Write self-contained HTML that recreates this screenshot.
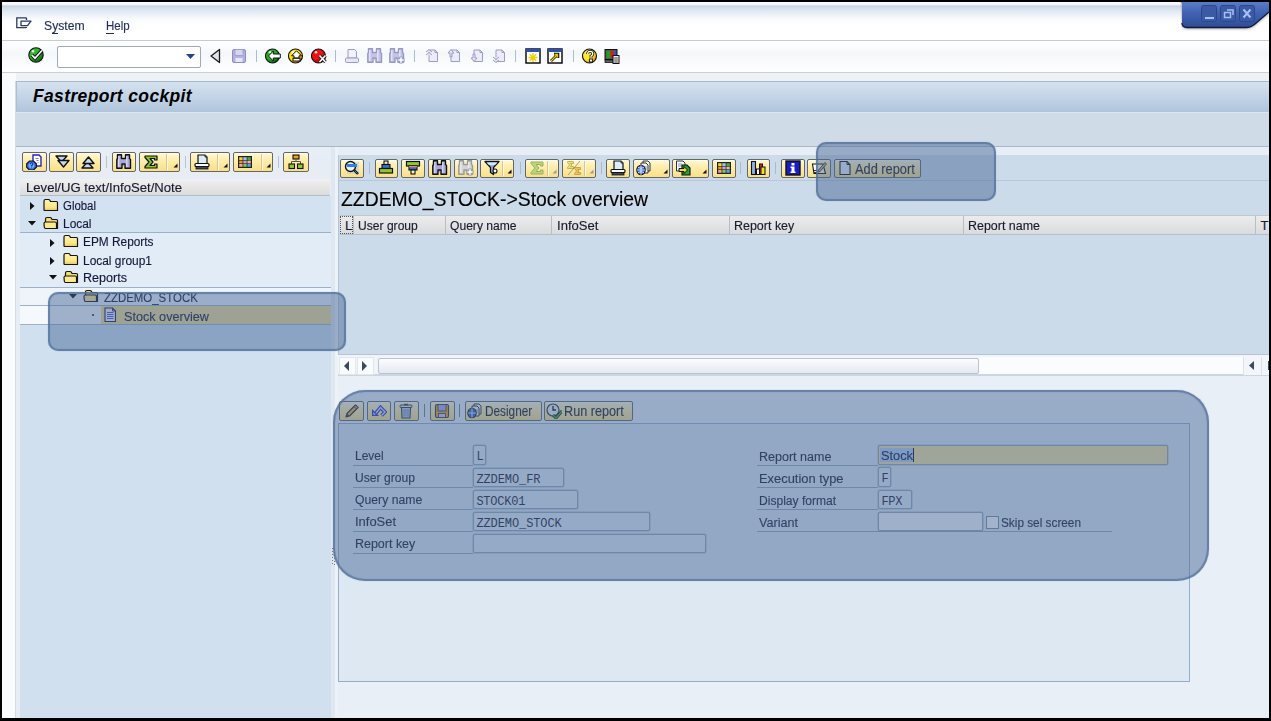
<!DOCTYPE html><html><head><meta charset="utf-8"><style>
html,body{margin:0;padding:0;width:1271px;height:721px;overflow:hidden;background:#000;}
body div{position:absolute;}
</style></head><body>
<div style="left:0px;top:0px;width:1271px;height:721px;background:#000;"></div>
<div style="left:2px;top:2px;width:1267px;height:716px;background:#e9eff6;"></div>
<div style="left:2px;top:2px;width:1267px;height:38px;background:linear-gradient(#f4f7fb 0px,#f4f7fb 1px,#fdfeff 2px,#c9d5e5 4px,#e6ecf4 10px,#fbfcfe 18px,#ffffff 24px,#ffffff 38px);"></div>
<div style="left:2px;top:40px;width:1267px;height:1px;background:#c3ccd8;"></div>
<div style="left:2px;top:41px;width:1267px;height:1px;background:#e2e7ee;"></div>
<div style="left:2px;top:41px;width:1267px;height:31px;background:linear-gradient(#ffffff,#f4f7fa 40%,#ffffff);"></div>
<div style="left:2px;top:72px;width:1267px;height:1px;background:#c8d0da;"></div>
<div style="left:2px;top:73px;width:1267px;height:8px;background:#eef2f7;"></div>
<div style="left:2px;top:73px;width:14px;height:645px;background:#f9fbfd;"></div>
<div style="left:16px;top:81px;width:1253px;height:31px;background:linear-gradient(#d5e2ef,#c3d4e6 50%,#afc5dc);border-top:1px solid #a8b8cb;box-sizing:border-box;"></div>
<div style="left:16px;top:112px;width:1253px;height:1px;background:#dde6ef;"></div>
<div style="left:16px;top:81px;width:1px;height:31px;background:#aebdd0;"></div>
<div style="left:16px;top:113px;width:1px;height:33px;background:#b9c6d5;"></div>
<div style="left:16px;top:113px;width:1253px;height:33px;background:#cfdbe6;"></div>
<div style="left:16px;top:146px;width:1253px;height:1px;background:#a9b8c9;"></div>
<div style="left:16px;top:147px;width:1253px;height:8px;background:#e8eef5;"></div>
<div style="left:15px;top:81px;width:1px;height:637px;background:#d3dbe6;"></div>
<div style="left:33px;top:87.99px;font-size:17.5px;line-height:17.5px;color:#000;font-family:'Liberation Sans', sans-serif;letter-spacing:0.351px;white-space:nowrap;font-weight:bold;font-style:italic;">Fastreport cockpit</div>
<div style="left:43.8px;top:18.78px;font-size:13.25px;line-height:13.25px;color:#1f2d5a;font-family:'Liberation Sans', sans-serif;letter-spacing:0.000px;white-space:nowrap;transform:scaleX(0.9211);transform-origin:0 0;-webkit-text-stroke:0.15px #1f2d5a;">System</div>
<div style="left:105.6px;top:18.78px;font-size:13.25px;line-height:13.25px;color:#1f2d5a;font-family:'Liberation Sans', sans-serif;letter-spacing:0.000px;white-space:nowrap;transform:scaleX(0.8656);transform-origin:0 0;-webkit-text-stroke:0.15px #1f2d5a;">Help</div>
<div style="left:52px;top:33px;width:6px;height:1px;background:#1f2d5a;"></div>
<div style="left:106px;top:33px;width:8px;height:1px;background:#1f2d5a;"></div>
<div style="left:16px;top:155px;width:315px;height:563px;background:#e6edf5;"></div>
<div style="left:20px;top:196px;width:311px;height:522px;background:#d0e0ee;"></div>
<div style="left:331px;top:147px;width:4px;height:571px;background:#dfe7f0;"></div>
<div style="left:335px;top:147px;width:3px;height:571px;background:#edf2f7;"></div>
<div style="left:20px;top:179px;width:310px;height:17px;background:linear-gradient(#f0f0f0,#dcdcdc);border-bottom:1px solid #b5bdc6;box-sizing:border-box;"></div>
<div style="left:26px;top:180.78px;font-size:13.25px;line-height:13.25px;color:#1a1a2e;font-family:'Liberation Sans', sans-serif;letter-spacing:0.000px;white-space:nowrap;transform:scaleX(0.9898);transform-origin:0 0;-webkit-text-stroke:0.15px #1a1a2e;">Level/UG text/InfoSet/Note</div>
<div style="left:20px;top:196px;width:311px;height:36px;background:#d3e2f0;"></div>
<div style="left:20px;top:232px;width:311px;height:1px;background:#9db2c9;"></div>
<div style="left:20px;top:233px;width:311px;height:54px;background:#e2ecf7;"></div>
<div style="left:20px;top:287px;width:311px;height:1px;background:#9db2c9;"></div>
<div style="left:20px;top:288px;width:311px;height:17px;background:#eef4fa;"></div>
<div style="left:20px;top:305px;width:311px;height:1px;background:#9db2c9;"></div>
<div style="left:20px;top:306px;width:311px;height:18px;background:#f5f8fc;"></div>
<div style="left:20px;top:324px;width:311px;height:1px;background:#9db2c9;"></div>
<div style="left:101px;top:306px;width:230px;height:18px;background:#f2dc92;"></div>
<div style="left:338px;top:155px;width:931px;height:200px;background:#ccdbe9;"></div>
<div style="left:338px;top:155px;width:1px;height:200px;background:#b4c4d6;"></div>
<div style="left:338px;top:180px;width:931px;height:1px;background:#b9c8d8;"></div>
<div style="left:341px;top:188.66px;font-size:20.25px;line-height:20.25px;color:#000;font-family:'Liberation Sans', sans-serif;letter-spacing:0.000px;white-space:nowrap;transform:scaleX(0.9567);transform-origin:0 0;-webkit-text-stroke:0.15px #000;">ZZDEMO_STOCK-&gt;Stock overview</div>
<div style="left:340px;top:215px;width:929px;height:20px;background:linear-gradient(#ececec,#d9dbde);border-top:1px solid #c2c8cf;border-bottom:1px solid #b8bec6;box-sizing:border-box;"></div>
<div style="left:353px;top:216px;width:1px;height:18px;background:#b9bec5;"></div>
<div style="left:445px;top:216px;width:1px;height:18px;background:#b9bec5;"></div>
<div style="left:551px;top:216px;width:1px;height:18px;background:#b9bec5;"></div>
<div style="left:729px;top:216px;width:1px;height:18px;background:#b9bec5;"></div>
<div style="left:963px;top:216px;width:1px;height:18px;background:#b9bec5;"></div>
<div style="left:1255px;top:216px;width:1px;height:18px;background:#b9bec5;"></div>
<div style="left:340px;top:216px;width:13px;height:18px;border:1px dotted #555;box-sizing:border-box;"></div>
<div style="left:345px;top:219.08px;font-size:13.25px;line-height:13.25px;color:#1a1a2e;font-family:'Liberation Sans', sans-serif;letter-spacing:0.000px;white-space:nowrap;-webkit-text-stroke:0.15px #1a1a2e;">L</div>
<div style="left:357.5px;top:219.08px;font-size:13.25px;line-height:13.25px;color:#1a1a2e;font-family:'Liberation Sans', sans-serif;letter-spacing:0.000px;white-space:nowrap;transform:scaleX(0.9123);transform-origin:0 0;-webkit-text-stroke:0.15px #1a1a2e;">User group</div>
<div style="left:450.4px;top:219.08px;font-size:13.25px;line-height:13.25px;color:#1a1a2e;font-family:'Liberation Sans', sans-serif;letter-spacing:0.000px;white-space:nowrap;transform:scaleX(0.9133);transform-origin:0 0;-webkit-text-stroke:0.15px #1a1a2e;">Query name</div>
<div style="left:556.5px;top:219.08px;font-size:13.25px;line-height:13.25px;color:#1a1a2e;font-family:'Liberation Sans', sans-serif;letter-spacing:0.000px;white-space:nowrap;transform:scaleX(0.9857);transform-origin:0 0;-webkit-text-stroke:0.15px #1a1a2e;">InfoSet</div>
<div style="left:734.3px;top:219.08px;font-size:13.25px;line-height:13.25px;color:#1a1a2e;font-family:'Liberation Sans', sans-serif;letter-spacing:0.000px;white-space:nowrap;transform:scaleX(0.9410);transform-origin:0 0;-webkit-text-stroke:0.15px #1a1a2e;">Report key</div>
<div style="left:968px;top:219.08px;font-size:13.25px;line-height:13.25px;color:#1a1a2e;font-family:'Liberation Sans', sans-serif;letter-spacing:0.000px;white-space:nowrap;transform:scaleX(0.9398);transform-origin:0 0;-webkit-text-stroke:0.15px #1a1a2e;">Report name</div>
<div style="left:1260.5px;top:218.78px;font-size:13.25px;line-height:13.25px;color:#1a1a2e;font-family:'Liberation Sans', sans-serif;letter-spacing:0.000px;white-space:nowrap;-webkit-text-stroke:0.15px #1a1a2e;">T</div>
<div style="left:338px;top:354px;width:931px;height:1px;background:#b4c4d6;"></div>
<div style="left:338px;top:355px;width:931px;height:21px;background:#f1f5f9;border-bottom:2px solid #cdd6e0;box-sizing:border-box;"></div>
<div style="left:979px;top:357px;width:264px;height:17px;background:#fbfcfd;"></div>
<div style="left:1243px;top:357px;width:1px;height:18px;background:#d8e2ec;"></div>
<div style="left:1244px;top:357px;width:17px;height:18px;background:#f2f5f9;"></div>
<div style="left:1261px;top:357px;width:1px;height:18px;background:#d8e2ec;"></div>
<div style="left:1262px;top:357px;width:7px;height:18px;background:#f2f5f9;"></div>
<div style="left:1268px;top:361px;width:1px;height:9px;background:#3a4a5c;"></div>
<div style="left:675px;top:365px;width:1px;height:1px;background:#9aa8b8;"></div>
<div style="left:674px;top:364px;width:1px;height:1px;background:#ffffff;"></div>
<div style="left:675px;top:369px;width:1px;height:1px;background:#9aa8b8;"></div>
<div style="left:674px;top:368px;width:1px;height:1px;background:#ffffff;"></div>
<div style="left:678px;top:365px;width:1px;height:1px;background:#9aa8b8;"></div>
<div style="left:677px;top:364px;width:1px;height:1px;background:#ffffff;"></div>
<div style="left:678px;top:369px;width:1px;height:1px;background:#9aa8b8;"></div>
<div style="left:677px;top:368px;width:1px;height:1px;background:#ffffff;"></div>
<div style="left:681px;top:365px;width:1px;height:1px;background:#9aa8b8;"></div>
<div style="left:680px;top:364px;width:1px;height:1px;background:#ffffff;"></div>
<div style="left:681px;top:369px;width:1px;height:1px;background:#9aa8b8;"></div>
<div style="left:680px;top:368px;width:1px;height:1px;background:#ffffff;"></div>
<div style="left:378px;top:358px;width:601px;height:16px;background:linear-gradient(#fbfcfd,#e4eaf1);border:1px solid #b9c4d0;border-radius:2px;box-sizing:border-box;"></div>
<div style="left:339px;top:357px;width:17px;height:18px;background:#f9fbfd;border:1px solid #e1e7ee;box-sizing:border-box;"></div>
<div style="left:357px;top:357px;width:17px;height:18px;background:#f9fbfd;border:1px solid #e1e7ee;box-sizing:border-box;"></div>
<svg style="position:absolute;left:344px;top:361px;" width="6" height="10" viewBox="0 0 6 10"><path d="M5 0 L0 5 L5 10Z" fill="#3a4a5c"/></svg>
<svg style="position:absolute;left:362px;top:361px;" width="6" height="10" viewBox="0 0 6 10"><path d="M0 0 L5 5 L0 10Z" fill="#3a4a5c"/></svg>
<svg style="position:absolute;left:1249px;top:361px;" width="6" height="9" viewBox="0 0 6 9"><path d="M5 0 L0 4.5 L5 9Z" fill="#3a4a5c"/></svg>
<div style="left:338px;top:423px;width:852px;height:259px;background:#dde8f2;border:1px solid #94afcc;box-sizing:border-box;"></div>
<div style="left:354.5px;top:448.78px;font-size:13.25px;line-height:13.25px;color:#1a1a2e;font-family:'Liberation Sans', sans-serif;letter-spacing:0.000px;white-space:nowrap;transform:scaleX(0.9057);transform-origin:0 0;-webkit-text-stroke:0.15px #1a1a2e;">Level</div>
<div style="left:352.5px;top:465px;width:120.5px;height:1px;background:#97a8bc;"></div>
<div style="left:354.5px;top:470.78px;font-size:13.25px;line-height:13.25px;color:#1a1a2e;font-family:'Liberation Sans', sans-serif;letter-spacing:0.000px;white-space:nowrap;transform:scaleX(0.9154);transform-origin:0 0;-webkit-text-stroke:0.15px #1a1a2e;">User group</div>
<div style="left:352.5px;top:487px;width:120.5px;height:1px;background:#97a8bc;"></div>
<div style="left:354.5px;top:492.78px;font-size:13.25px;line-height:13.25px;color:#1a1a2e;font-family:'Liberation Sans', sans-serif;letter-spacing:0.000px;white-space:nowrap;transform:scaleX(0.9229);transform-origin:0 0;-webkit-text-stroke:0.15px #1a1a2e;">Query name</div>
<div style="left:352.5px;top:509px;width:120.5px;height:1px;background:#97a8bc;"></div>
<div style="left:354.5px;top:514.78px;font-size:13.25px;line-height:13.25px;color:#1a1a2e;font-family:'Liberation Sans', sans-serif;letter-spacing:0.000px;white-space:nowrap;transform:scaleX(0.9762);transform-origin:0 0;-webkit-text-stroke:0.15px #1a1a2e;">InfoSet</div>
<div style="left:352.5px;top:531px;width:120.5px;height:1px;background:#97a8bc;"></div>
<div style="left:354.5px;top:536.78px;font-size:13.25px;line-height:13.25px;color:#1a1a2e;font-family:'Liberation Sans', sans-serif;letter-spacing:0.000px;white-space:nowrap;transform:scaleX(0.9410);transform-origin:0 0;-webkit-text-stroke:0.15px #1a1a2e;">Report key</div>
<div style="left:352.5px;top:553px;width:120.5px;height:1px;background:#97a8bc;"></div>
<div style="left:473px;top:445px;width:13px;height:20px;background:#e3ecf5;border:1px solid #97a6b8;border-radius:2px;box-sizing:border-box;box-shadow:0 0 0 0.5px rgba(120,140,165,0.5);"></div>
<div style="left:476.4px;top:450.60px;font-size:12px;line-height:12px;color:#1a1a2e;font-family:'Liberation Mono', monospace;letter-spacing:0.000px;white-space:nowrap;">L</div>
<div style="left:473px;top:468px;width:91px;height:19px;background:#e3ecf5;border:1px solid #97a6b8;border-radius:2px;box-sizing:border-box;box-shadow:0 0 0 0.5px rgba(120,140,165,0.5);"></div>
<div style="left:476.4px;top:473.60px;font-size:12px;line-height:12px;color:#1a1a2e;font-family:'Liberation Mono', monospace;letter-spacing:-0.090px;white-space:nowrap;">ZZDEMO_FR</div>
<div style="left:473px;top:490px;width:105px;height:19px;background:#e3ecf5;border:1px solid #97a6b8;border-radius:2px;box-sizing:border-box;box-shadow:0 0 0 0.5px rgba(120,140,165,0.5);"></div>
<div style="left:476.4px;top:495.60px;font-size:12px;line-height:12px;color:#1a1a2e;font-family:'Liberation Mono', monospace;letter-spacing:-0.232px;white-space:nowrap;">STOCK01</div>
<div style="left:473px;top:512px;width:177px;height:19px;background:#e3ecf5;border:1px solid #97a6b8;border-radius:2px;box-sizing:border-box;box-shadow:0 0 0 0.5px rgba(120,140,165,0.5);"></div>
<div style="left:476.4px;top:517.60px;font-size:12px;line-height:12px;color:#1a1a2e;font-family:'Liberation Mono', monospace;letter-spacing:-0.093px;white-space:nowrap;">ZZDEMO_STOCK</div>
<div style="left:473px;top:534px;width:233px;height:19px;background:#e3ecf5;border:1px solid #97a6b8;border-radius:2px;box-sizing:border-box;box-shadow:0 0 0 0.5px rgba(120,140,165,0.5);"></div>
<div style="left:759px;top:449.58px;font-size:13.25px;line-height:13.25px;color:#1a1a2e;font-family:'Liberation Sans', sans-serif;letter-spacing:0.000px;white-space:nowrap;transform:scaleX(0.9451);transform-origin:0 0;-webkit-text-stroke:0.15px #1a1a2e;">Report name</div>
<div style="left:757px;top:465px;width:121px;height:1px;background:#97a8bc;"></div>
<div style="left:759px;top:471.58px;font-size:13.25px;line-height:13.25px;color:#1a1a2e;font-family:'Liberation Sans', sans-serif;letter-spacing:0.000px;white-space:nowrap;transform:scaleX(0.9721);transform-origin:0 0;-webkit-text-stroke:0.15px #1a1a2e;">Execution type</div>
<div style="left:757px;top:487px;width:121px;height:1px;background:#97a8bc;"></div>
<div style="left:759px;top:493.58px;font-size:13.25px;line-height:13.25px;color:#1a1a2e;font-family:'Liberation Sans', sans-serif;letter-spacing:0.000px;white-space:nowrap;transform:scaleX(0.9116);transform-origin:0 0;-webkit-text-stroke:0.15px #1a1a2e;">Display format</div>
<div style="left:757px;top:509px;width:121px;height:1px;background:#97a8bc;"></div>
<div style="left:759px;top:515.58px;font-size:13.25px;line-height:13.25px;color:#1a1a2e;font-family:'Liberation Sans', sans-serif;letter-spacing:0.000px;white-space:nowrap;transform:scaleX(0.9512);transform-origin:0 0;-webkit-text-stroke:0.15px #1a1a2e;">Variant</div>
<div style="left:757px;top:531px;width:355px;height:1px;background:#97a8bc;"></div>
<div style="left:878px;top:445px;width:290px;height:20px;background:#f7e39a;border:1px solid #97a6b8;border-radius:2px;box-sizing:border-box;box-shadow:0 0 0 0.5px rgba(120,140,165,0.5);"></div>
<div style="left:880px;top:448px;width:34px;height:14px;background:#b4cdf5;"></div>
<div style="left:881px;top:449.28px;font-size:13.25px;line-height:13.25px;color:#101830;font-family:'Liberation Sans', sans-serif;letter-spacing:0.000px;white-space:nowrap;transform:scaleX(0.9656);transform-origin:0 0;-webkit-text-stroke:0.15px #101830;">Stock</div>
<div style="left:913px;top:448px;width:1px;height:14px;background:#111;"></div>
<div style="left:878px;top:467px;width:13px;height:20px;background:#e3ecf5;border:1px solid #97a6b8;border-radius:2px;box-sizing:border-box;box-shadow:0 0 0 0.5px rgba(120,140,165,0.5);"></div>
<div style="left:881.4px;top:472.60px;font-size:12px;line-height:12px;color:#1a1a2e;font-family:'Liberation Mono', monospace;letter-spacing:0.000px;white-space:nowrap;">F</div>
<div style="left:878px;top:490px;width:34px;height:19px;background:#e3ecf5;border:1px solid #97a6b8;border-radius:2px;box-sizing:border-box;box-shadow:0 0 0 0.5px rgba(120,140,165,0.5);"></div>
<div style="left:881.4px;top:495.60px;font-size:12px;line-height:12px;color:#1a1a2e;font-family:'Liberation Mono', monospace;letter-spacing:-0.270px;white-space:nowrap;">FPX</div>
<div style="left:878px;top:512px;width:105px;height:19px;background:#f7f9fc;border:1px solid #97a6b8;border-radius:2px;box-sizing:border-box;box-shadow:0 0 0 0.5px rgba(120,140,165,0.5);"></div>
<div style="left:986px;top:516px;width:13px;height:13px;background:#fff;border:1px solid #7b8a9c;box-sizing:border-box;"></div>
<div style="left:1001px;top:516.28px;font-size:13.25px;line-height:13.25px;color:#1a1a2e;font-family:'Liberation Sans', sans-serif;letter-spacing:0.000px;white-space:nowrap;transform:scaleX(0.8903);transform-origin:0 0;-webkit-text-stroke:0.15px #1a1a2e;">Skip sel screen</div>
<svg style="position:absolute;left:16px;top:17px;" width="16" height="12" viewBox="0 0 16 12"><path d="M10.5 3 V1.5 Q10.5 0.8 9.8 0.8 H0.8 V10.6 H9.8 Q10.5 10.6 10.5 10" fill="none" stroke="#2a3a68" stroke-width="1.3"/><path d="M5 8.6 V4.2 H15 L11.5 8.6Z" fill="none" stroke="#2a3a68" stroke-width="1.3" stroke-linejoin="round"/></svg>
<svg style="position:absolute;left:28px;top:47px;" width="16" height="16" viewBox="0 0 16 16"><defs><radialGradient id="g2db82d" cx="0.3" cy="0.25" r="0.85"><stop offset="0" stop-color="#2db82d"/><stop offset="0.55" stop-color="#2db82d"/><stop offset="1" stop-color="#0a4a10"/></radialGradient></defs><circle cx="8" cy="8" r="7.2" fill="url(#g2db82d)" stroke="#111" stroke-width="1.1"/><circle cx="5" cy="4.3" r="1.3" fill="#fff" opacity="0.9"/><path d="M3.8 8 L7 11.2 L14 3.5" fill="none" stroke="#111" stroke-width="3.6"/><path d="M3.8 8 L7 11.2 L14 3.5" fill="none" stroke="#fff" stroke-width="1.7"/></svg>
<div style="left:57px;top:46px;width:144px;height:22px;background:#fff;border:1px solid #a0a8b2;border-radius:2px;box-sizing:border-box;"></div>
<svg style="position:absolute;left:186px;top:54px;" width="9" height="5" viewBox="0 0 9 5"><path d="M0 0 H9 L4.5 5Z" fill="#24457e"/></svg>
<svg style="position:absolute;left:208px;top:48px;" width="16" height="16" viewBox="0 0 16 16"><path d="M11.5 1.5 V14.5 L3 8Z" fill="#dde3ea" stroke="#1a1a1a" stroke-width="1.3" stroke-linejoin="round"/></svg>
<svg style="position:absolute;left:231px;top:48px;" width="16" height="16" viewBox="0 0 16 16"><rect x="1.5" y="1.5" width="13" height="13" rx="1.5" fill="#b3b3dc" stroke="#8c8cc4"/><rect x="4" y="1.5" width="8" height="6" fill="#d6d6f0" stroke="#9a9acc" stroke-width="0.8"/><rect x="4.5" y="10" width="7" height="4" fill="#e8e8f8"/></svg>
<div style="left:256px;top:50px;width:1px;height:12px;background:#a9bdd3;"></div>
<svg style="position:absolute;left:265px;top:48px;" width="16" height="16" viewBox="0 0 16 16"><defs><radialGradient id="g22b022" cx="0.3" cy="0.25" r="0.85"><stop offset="0" stop-color="#22b022"/><stop offset="0.55" stop-color="#22b022"/><stop offset="1" stop-color="#064a10"/></radialGradient></defs><circle cx="7.5" cy="8" r="7" fill="url(#g22b022)" stroke="#111" stroke-width="1.1"/><circle cx="5" cy="4.3" r="1.3" fill="#fff" opacity="0.9"/><path d="M3.5 8 L8.3 3 V6 H15.3 V10 H8.3 V13Z" fill="#fff" stroke="#111" stroke-width="1"/></svg>
<svg style="position:absolute;left:288px;top:48px;" width="16" height="16" viewBox="0 0 16 16"><defs><radialGradient id="gffe800" cx="0.3" cy="0.25" r="0.85"><stop offset="0" stop-color="#ffe800"/><stop offset="0.55" stop-color="#ffe800"/><stop offset="1" stop-color="#e07000"/></radialGradient></defs><circle cx="7.5" cy="8" r="7" fill="url(#gffe800)" stroke="#111" stroke-width="1.1"/><circle cx="5" cy="4.3" r="1.3" fill="#fff" opacity="0.9"/><path d="M8.5 2.8 L13.5 7.8 H11 V10 H6 V7.8 H3.5Z" fill="#fff" stroke="#111" stroke-width="1"/><rect x="5" y="10.3" width="7" height="2.7" fill="#fff" stroke="#111" stroke-width="1"/></svg>
<svg style="position:absolute;left:311px;top:48px;" width="16" height="16" viewBox="0 0 16 16"><defs><radialGradient id="gf01010" cx="0.3" cy="0.25" r="0.85"><stop offset="0" stop-color="#f01010"/><stop offset="0.55" stop-color="#f01010"/><stop offset="1" stop-color="#900000"/></radialGradient></defs><circle cx="7.5" cy="8" r="7" fill="url(#gf01010)" stroke="#111" stroke-width="1.1"/><circle cx="5" cy="4.3" r="1.3" fill="#fff" opacity="0.9"/><path d="M8.5 7.5 L14.5 14 M14.5 7.5 L8.5 14" stroke="#222" stroke-width="3.4"/><path d="M8.5 7.5 L14.5 14 M14.5 7.5 L8.5 14" stroke="#fff" stroke-width="1.6"/></svg>
<div style="left:335px;top:50px;width:1px;height:12px;background:#a9bdd3;"></div>
<svg style="position:absolute;left:344px;top:48px;" width="16" height="16" viewBox="0 0 16 16"><path d="M4 1.5 H10.5 L12.5 3.5 V10 H4Z" fill="#f2f2fa" stroke="#9c9cc8"/><rect x="1.5" y="10" width="13" height="4.5" rx="1" fill="#e6e6f4" stroke="#9c9cc8"/></svg>
<svg style="position:absolute;left:367px;top:48px;" width="16" height="16" viewBox="0 0 16 16"><path d="M1.5 0.8 H5.5 V4.5 H9.5 V0.8 H13.5 V4.5 L14.5 5.5 V14.2 H9 V10 H6 V14.2 H0.8 V5.5 L1.5 4.5Z" fill="#c4c4e4" stroke="#9898c8" stroke-width="1.4" stroke-linejoin="round"/><path d="M2.8 2 V13 M10.8 2 V13" stroke="#ffffff" stroke-width="1" opacity="0.75"/><rect x="7" y="11" width="1.2" height="1.2" fill="#c4c4e4"/></svg>
<svg style="position:absolute;left:389px;top:48px;" width="16" height="16" viewBox="0 0 16 16"><path d="M1.5 0.8 H5.5 V4.5 H9.5 V0.8 H13.5 V4.5 L14.5 5.5 V14.2 H9 V10 H6 V14.2 H0.8 V5.5 L1.5 4.5Z" fill="#c4c4e4" stroke="#9898c8" stroke-width="1.4" stroke-linejoin="round"/><path d="M2.8 2 V13 M10.8 2 V13" stroke="#ffffff" stroke-width="1" opacity="0.75"/><rect x="7" y="11" width="1.2" height="1.2" fill="#c4c4e4"/><path d="M12 8.5 V15.5 M8.5 12 H15.5" stroke="#9898c8" stroke-width="3.4"/><path d="M12 9.3 V14.7 M9.3 12 H14.7" stroke="#fff" stroke-width="1.5"/></svg>
<div style="left:414px;top:50px;width:1px;height:12px;background:#a9bdd3;"></div>
<svg style="position:absolute;left:424px;top:48px;" width="16" height="16" viewBox="0 0 16 16"><path d="M5 2 H11 L13.5 4.5 V13.5 H5Z" fill="#ececf8" stroke="#9c9cc8"/><path d="M11 2 V4.5 H13.5" fill="none" stroke="#9c9cc8"/><path d="M2 4 L5 1.5 L8 4 M2 7 L5 4.5 L8 7" fill="#e4e4f4" stroke="#9c9cc8"/></svg>
<svg style="position:absolute;left:446px;top:48px;" width="16" height="16" viewBox="0 0 16 16"><path d="M5 2 H11 L13.5 4.5 V13.5 H5Z" fill="#ececf8" stroke="#9c9cc8"/><path d="M11 2 V4.5 H13.5" fill="none" stroke="#9c9cc8"/><path d="M2 5 L5 1.5 L8 5 H6 V9 H4 V5Z" fill="#e4e4f4" stroke="#9c9cc8"/></svg>
<svg style="position:absolute;left:469px;top:48px;" width="16" height="16" viewBox="0 0 16 16"><path d="M5 2 H11 L13.5 4.5 V13.5 H5Z" fill="#ececf8" stroke="#9c9cc8"/><path d="M11 2 V4.5 H13.5" fill="none" stroke="#9c9cc8"/><path d="M2 10 L5 13.5 L8 10 H6 V6 H4 V10Z" fill="#e4e4f4" stroke="#9c9cc8"/></svg>
<svg style="position:absolute;left:491px;top:48px;" width="16" height="16" viewBox="0 0 16 16"><path d="M5 2 H11 L13.5 4.5 V13.5 H5Z" fill="#ececf8" stroke="#9c9cc8"/><path d="M11 2 V4.5 H13.5" fill="none" stroke="#9c9cc8"/><path d="M2 9 L5 11.5 L8 9 M2 12 L5 14.5 L8 12" fill="#e4e4f4" stroke="#9c9cc8"/></svg>
<div style="left:515px;top:50px;width:1px;height:12px;background:#a9bdd3;"></div>
<svg style="position:absolute;left:525px;top:48px;" width="16" height="16" viewBox="0 0 16 16"><rect x="1" y="1" width="14" height="14" fill="#fff" stroke="#111" stroke-width="1.5"/><rect x="1" y="1" width="14" height="3" fill="#2a50b0"/><path d="M8 5 V14 M3.5 9.5 H12.5 M4.8 6.3 L11.2 12.7 M11.2 6.3 L4.8 12.7" stroke="#f0d000" stroke-width="1.3"/></svg>
<svg style="position:absolute;left:547px;top:48px;" width="16" height="16" viewBox="0 0 16 16"><rect x="1" y="1" width="14" height="14" fill="#fff" stroke="#111" stroke-width="1.5"/><rect x="1" y="1" width="14" height="3" fill="#2a50b0"/><path d="M4 13 L10 7 M7 6 H11 V10" fill="none" stroke="#111" stroke-width="2.6"/><path d="M4 13 L10 7 M7.5 6.5 H10.5 V9.5" fill="none" stroke="#f0c800" stroke-width="1.3"/></svg>
<div style="left:573px;top:50px;width:1px;height:12px;background:#a9bdd3;"></div>
<svg style="position:absolute;left:582px;top:48px;" width="16" height="16" viewBox="0 0 16 16"><defs><radialGradient id="gffe830" cx="0.3" cy="0.25" r="0.85"><stop offset="0" stop-color="#ffe830"/><stop offset="0.55" stop-color="#ffe830"/><stop offset="1" stop-color="#e08a00"/></radialGradient></defs><circle cx="7.5" cy="8" r="7" fill="url(#gffe830)" stroke="#111" stroke-width="1.1"/><circle cx="5" cy="4.3" r="1.3" fill="#fff" opacity="0.9"/><path d="M5.6 6 Q5.6 3.3 8.2 3.3 Q10.8 3.3 10.8 5.8 Q10.8 7.3 9 8 V9.8" fill="none" stroke="#111" stroke-width="2.8"/><path d="M5.6 6 Q5.6 3.3 8.2 3.3 Q10.8 3.3 10.8 5.8 Q10.8 7.3 9 8 V9.8" fill="none" stroke="#fff" stroke-width="1.3"/><rect x="7.4" y="11" width="3" height="3" fill="#fff" stroke="#111" stroke-width="0.9"/></svg>
<svg style="position:absolute;left:604px;top:48px;" width="16" height="16" viewBox="0 0 16 16"><rect x="1" y="1.5" width="12" height="10" fill="#555" stroke="#111"/><rect x="2.5" y="3" width="4" height="7" fill="#1ea01e"/><rect x="6.5" y="3" width="4" height="7" fill="#d02020"/><rect x="10" y="3" width="2" height="7" fill="#3050d0"/><rect x="1" y="12" width="8" height="2.5" fill="#666" stroke="#111" stroke-width="0.8"/><rect x="9" y="7.5" width="6" height="8" fill="#eee" stroke="#111"/><path d="M10.2 10 H13.8 M10.2 12 H13.8 M10.2 14 H13.8" stroke="#333" stroke-width="0.9"/></svg>
<div style="left:22px;top:152px;width:25px;height:20px;background:linear-gradient(#fff9dc 0%,#fff1b8 25%,#fce699 70%,#f9df88 100%);border:1px solid #666;border-radius:2px;box-sizing:border-box;box-shadow:inset 0 1px 0 #fffcea;"></div>
<svg style="position:absolute;left:26px;top:154px;" width="16" height="16" viewBox="0 0 16 16"><path d="M7 1 H13 L15 3 V12 H7Z" fill="#fff" stroke="#2424c8" stroke-width="1.4"/><path d="M9.5 4.5 H12.5 M10.5 6.5 H12.5 M11.5 8.5 H12.5" stroke="#7070a0" stroke-width="0.9"/><path d="M3.5 7 H7.5 L10.3 9.8 V13.3 L7.5 16 H3.5 L0.7 13.3 V9.8Z" fill="#3a7cf0" stroke="#111" stroke-width="1.2"/><circle cx="5.5" cy="11.5" r="2.7" fill="#8fd0ff" opacity="0.6"/><path d="M4.2 10.3 Q4.2 8.8 5.5 8.8 Q6.8 8.8 6.8 10 Q6.8 11 5.6 11.5 V12.5 M5.6 13.6 V14.3" fill="none" stroke="#1030c0" stroke-width="1.1"/></svg>
<div style="left:49px;top:152px;width:25px;height:20px;background:linear-gradient(#fff9dc 0%,#fff1b8 25%,#fce699 70%,#f9df88 100%);border:1px solid #666;border-radius:2px;box-sizing:border-box;box-shadow:inset 0 1px 0 #fffcea;"></div>
<svg style="position:absolute;left:54px;top:154px;" width="16" height="16" viewBox="0 0 16 16"><path d="M2 2 H13 L7.5 8Z" fill="#c8d8f4" stroke="#111" stroke-width="1.4" stroke-linejoin="round"/><path d="M4 6.5 H15 L9.5 13Z" fill="#c8d8f4" stroke="#111" stroke-width="1.4" stroke-linejoin="round"/></svg>
<div style="left:76px;top:152px;width:25px;height:20px;background:linear-gradient(#fff9dc 0%,#fff1b8 25%,#fce699 70%,#f9df88 100%);border:1px solid #666;border-radius:2px;box-sizing:border-box;box-shadow:inset 0 1px 0 #fffcea;"></div>
<svg style="position:absolute;left:80px;top:154px;" width="16" height="16" viewBox="0 0 16 16"><path d="M2 14 H13 L7.5 8Z" fill="#c8d8f4" stroke="#111" stroke-width="1.4" stroke-linejoin="round"/><path d="M3 9.5 H14 L8.5 3Z" fill="#c8d8f4" stroke="#111" stroke-width="1.4" stroke-linejoin="round"/></svg>
<div style="left:106px;top:156px;width:1px;height:12px;background:#b8c4d0;"></div>
<div style="left:112px;top:152px;width:24px;height:20px;background:linear-gradient(#fff9dc 0%,#fff1b8 25%,#fce699 70%,#f9df88 100%);border:1px solid #666;border-radius:2px;box-sizing:border-box;box-shadow:inset 0 1px 0 #fffcea;"></div>
<svg style="position:absolute;left:116px;top:154px;" width="16" height="16" viewBox="0 0 16 16"><path d="M1.5 0.8 H5.5 V4.5 H9.5 V0.8 H13.5 V4.5 L14.5 5.5 V14.2 H9 V10 H6 V14.2 H0.8 V5.5 L1.5 4.5Z" fill="#a8a8dc" stroke="#111" stroke-width="1.4" stroke-linejoin="round"/><path d="M2.8 2 V13 M10.8 2 V13" stroke="#ffffff" stroke-width="1" opacity="0.75"/><rect x="7" y="11" width="1.2" height="1.2" fill="#a8a8dc"/></svg>
<div style="left:139px;top:152px;width:41px;height:20px;background:linear-gradient(#fff9dc 0%,#fff1b8 25%,#fce699 70%,#f9df88 100%);border:1px solid #666;border-radius:2px;box-sizing:border-box;box-shadow:inset 0 1px 0 #fffcea;"></div>
<svg style="position:absolute;left:143px;top:154px;" width="16" height="16" viewBox="0 0 16 16"><path d="M2 2 H14 V6 H11.5 V4.5 H7 L10 8 L7 11.5 H11.5 V10 H14 V14 H2 V12.5 L6 8 L2 3.5Z" fill="#8cc820" stroke="#111" stroke-width="1.2" stroke-linejoin="round"/></svg>
<div style="left:166px;top:154px;width:1px;height:16px;background:#d8c890;"></div>
<div style="left:167px;top:154px;width:1px;height:16px;background:#fffbe8;"></div>
<svg style="position:absolute;left:173px;top:163px;" width="5" height="5" viewBox="0 0 5 5"><path d="M4.5 0.5 V4.5 H0.5Z" fill="#111"/></svg>
<div style="left:185px;top:156px;width:1px;height:12px;background:#b8c4d0;"></div>
<div style="left:190px;top:152px;width:40px;height:20px;background:linear-gradient(#fff9dc 0%,#fff1b8 25%,#fce699 70%,#f9df88 100%);border:1px solid #666;border-radius:2px;box-sizing:border-box;box-shadow:inset 0 1px 0 #fffcea;"></div>
<svg style="position:absolute;left:194px;top:154px;" width="16" height="16" viewBox="0 0 16 16"><path d="M4 1 H11 L13 3 V10 H4Z" fill="#dcecf8" stroke="#111" stroke-width="1.2"/><path d="M11 1 V3 H13" fill="#6aa0d0" stroke="#111" stroke-width="0.8"/><rect x="1" y="9.5" width="14" height="3" rx="1" fill="#fff" stroke="#111" stroke-width="1.2"/><rect x="2" y="12.5" width="12" height="2.5" fill="#3a4a6a" stroke="#111" stroke-width="0.8"/></svg>
<div style="left:217px;top:154px;width:1px;height:16px;background:#d8c890;"></div>
<div style="left:218px;top:154px;width:1px;height:16px;background:#fffbe8;"></div>
<svg style="position:absolute;left:223px;top:163px;" width="5" height="5" viewBox="0 0 5 5"><path d="M4.5 0.5 V4.5 H0.5Z" fill="#111"/></svg>
<div style="left:233px;top:152px;width:40px;height:20px;background:linear-gradient(#fff9dc 0%,#fff1b8 25%,#fce699 70%,#f9df88 100%);border:1px solid #666;border-radius:2px;box-sizing:border-box;box-shadow:inset 0 1px 0 #fffcea;"></div>
<svg style="position:absolute;left:237px;top:154px;" width="16" height="16" viewBox="0 0 16 16"><rect x="1" y="2" width="14" height="12" fill="#222" /><rect x="2.2" y="3.2" width="3.4" height="2.8" fill="#f0d820"/><rect x="6.3" y="3.2" width="3.4" height="2.8" fill="#a8c0f0"/><rect x="10.4" y="3.2" width="3.4" height="2.8" fill="#40b040"/><rect x="2.2" y="6.6" width="3.4" height="2.8" fill="#f09810"/><rect x="6.3" y="6.6" width="3.4" height="2.8" fill="#c8a0e0"/><rect x="10.4" y="6.6" width="3.4" height="2.8" fill="#f0b890"/><rect x="2.2" y="10" width="3.4" height="2.8" fill="#f0a0b0"/><rect x="6.3" y="10" width="3.4" height="2.8" fill="#80d020"/><rect x="10.4" y="10" width="3.4" height="2.8" fill="#40a8f0"/></svg>
<div style="left:261px;top:154px;width:1px;height:16px;background:#d8c890;"></div>
<div style="left:262px;top:154px;width:1px;height:16px;background:#fffbe8;"></div>
<svg style="position:absolute;left:266px;top:163px;" width="5" height="5" viewBox="0 0 5 5"><path d="M4.5 0.5 V4.5 H0.5Z" fill="#111"/></svg>
<div style="left:278px;top:156px;width:1px;height:12px;background:#b8c4d0;"></div>
<div style="left:283px;top:152px;width:26px;height:20px;background:linear-gradient(#fff9dc 0%,#fff1b8 25%,#fce699 70%,#f9df88 100%);border:1px solid #666;border-radius:2px;box-sizing:border-box;box-shadow:inset 0 1px 0 #fffcea;"></div>
<svg style="position:absolute;left:288px;top:154px;" width="16" height="16" viewBox="0 0 16 16"><rect x="5" y="1" width="6" height="4" fill="#f0a020" stroke="#111" stroke-width="1.1"/><path d="M8 5 V7.5 M3.5 10 V7.5 H12.5 V10" fill="none" stroke="#555" stroke-width="1"/><rect x="1" y="10" width="5.5" height="4.5" fill="#90c830" stroke="#111" stroke-width="1.1"/><rect x="9.5" y="10" width="5.5" height="4.5" fill="#90c830" stroke="#111" stroke-width="1.1"/></svg>
<svg style="position:absolute;left:30px;top:202px;" width="5" height="8" viewBox="0 0 5 8"><path d="M0 0 L4.5 4 L0 8Z" fill="#111"/></svg>
<svg style="position:absolute;left:43px;top:198px;" width="16" height="16" viewBox="0 0 16 16"><defs><linearGradient id="fg" x1="0" y1="0" x2="0" y2="1"><stop offset="0" stop-color="#fff3b0"/><stop offset="0.7" stop-color="#fbe68a"/><stop offset="1" stop-color="#e8c850"/></linearGradient></defs><path d="M1 12 V3 Q1 1.5 2.5 1.5 H5.5 Q6.5 1.5 7 2.5 L7.5 3.5 H13.5 Q14.5 3.5 14.5 4.5 V12.5 H1.5Z" fill="url(#fg)" stroke="#151515" stroke-width="1.2" stroke-linejoin="round"/></svg>
<div style="left:63.2px;top:199.28px;font-size:13.25px;line-height:13.25px;color:#141838;font-family:'Liberation Sans', sans-serif;letter-spacing:0.000px;white-space:nowrap;transform:scaleX(0.8613);transform-origin:0 0;-webkit-text-stroke:0.15px #141838;">Global</div>
<svg style="position:absolute;left:28px;top:221px;" width="8" height="5" viewBox="0 0 8 5"><path d="M0 0 H8 L4 4.5Z" fill="#111"/></svg>
<svg style="position:absolute;left:43px;top:216px;" width="16" height="16" viewBox="0 0 16 16"><path d="M2.5 6 V3 Q2.5 1.5 4 1.5 H7 Q8 1.5 8.5 2.5 L9 3.5 H13.5 Q14.5 3.5 14.5 4.5 V12.5 H3Z" fill="#f4dc78" stroke="#151515" stroke-width="1.2" stroke-linejoin="round"/><path d="M1 7.5 Q1 6 2.5 6 H12 Q13.5 6 13.5 7.5 V12.5 H2.5 Q1.5 12.5 1.3 11Z" fill="#fce98e" stroke="#151515" stroke-width="1.2" stroke-linejoin="round"/></svg>
<div style="left:63.2px;top:217.38px;font-size:13.25px;line-height:13.25px;color:#141838;font-family:'Liberation Sans', sans-serif;letter-spacing:0.000px;white-space:nowrap;transform:scaleX(0.8994);transform-origin:0 0;-webkit-text-stroke:0.15px #141838;">Local</div>
<svg style="position:absolute;left:50px;top:239px;" width="5" height="8" viewBox="0 0 5 8"><path d="M0 0 L4.5 4 L0 8Z" fill="#111"/></svg>
<svg style="position:absolute;left:63px;top:234px;" width="16" height="16" viewBox="0 0 16 16"><defs><linearGradient id="fg" x1="0" y1="0" x2="0" y2="1"><stop offset="0" stop-color="#fff3b0"/><stop offset="0.7" stop-color="#fbe68a"/><stop offset="1" stop-color="#e8c850"/></linearGradient></defs><path d="M1 12 V3 Q1 1.5 2.5 1.5 H5.5 Q6.5 1.5 7 2.5 L7.5 3.5 H13.5 Q14.5 3.5 14.5 4.5 V12.5 H1.5Z" fill="url(#fg)" stroke="#151515" stroke-width="1.2" stroke-linejoin="round"/></svg>
<div style="left:83px;top:235.38px;font-size:13.25px;line-height:13.25px;color:#141838;font-family:'Liberation Sans', sans-serif;letter-spacing:0.000px;white-space:nowrap;transform:scaleX(0.8947);transform-origin:0 0;-webkit-text-stroke:0.15px #141838;">EPM Reports</div>
<svg style="position:absolute;left:50px;top:257px;" width="5" height="8" viewBox="0 0 5 8"><path d="M0 0 L4.5 4 L0 8Z" fill="#111"/></svg>
<svg style="position:absolute;left:63px;top:252px;" width="16" height="16" viewBox="0 0 16 16"><defs><linearGradient id="fg" x1="0" y1="0" x2="0" y2="1"><stop offset="0" stop-color="#fff3b0"/><stop offset="0.7" stop-color="#fbe68a"/><stop offset="1" stop-color="#e8c850"/></linearGradient></defs><path d="M1 12 V3 Q1 1.5 2.5 1.5 H5.5 Q6.5 1.5 7 2.5 L7.5 3.5 H13.5 Q14.5 3.5 14.5 4.5 V12.5 H1.5Z" fill="url(#fg)" stroke="#151515" stroke-width="1.2" stroke-linejoin="round"/></svg>
<div style="left:83px;top:253.58px;font-size:13.25px;line-height:13.25px;color:#141838;font-family:'Liberation Sans', sans-serif;letter-spacing:0.000px;white-space:nowrap;transform:scaleX(0.9005);transform-origin:0 0;-webkit-text-stroke:0.15px #141838;">Local group1</div>
<svg style="position:absolute;left:49px;top:275px;" width="8" height="5" viewBox="0 0 8 5"><path d="M0 0 H8 L4 4.5Z" fill="#111"/></svg>
<svg style="position:absolute;left:63px;top:270px;" width="16" height="16" viewBox="0 0 16 16"><path d="M2.5 6 V3 Q2.5 1.5 4 1.5 H7 Q8 1.5 8.5 2.5 L9 3.5 H13.5 Q14.5 3.5 14.5 4.5 V12.5 H3Z" fill="#f4dc78" stroke="#151515" stroke-width="1.2" stroke-linejoin="round"/><path d="M1 7.5 Q1 6 2.5 6 H12 Q13.5 6 13.5 7.5 V12.5 H2.5 Q1.5 12.5 1.3 11Z" fill="#fce98e" stroke="#151515" stroke-width="1.2" stroke-linejoin="round"/></svg>
<div style="left:83px;top:271.38px;font-size:13.25px;line-height:13.25px;color:#141838;font-family:'Liberation Sans', sans-serif;letter-spacing:0.000px;white-space:nowrap;transform:scaleX(0.9481);transform-origin:0 0;-webkit-text-stroke:0.15px #141838;">Reports</div>
<svg style="position:absolute;left:69px;top:294px;" width="8" height="5" viewBox="0 0 8 5"><path d="M0 0 H8 L4 4.5Z" fill="#111"/></svg>
<svg style="position:absolute;left:83px;top:289px;" width="16" height="16" viewBox="0 0 16 16"><path d="M2.5 6 V3 Q2.5 1.5 4 1.5 H7 Q8 1.5 8.5 2.5 L9 3.5 H13.5 Q14.5 3.5 14.5 4.5 V12.5 H3Z" fill="#f4dc78" stroke="#151515" stroke-width="1.2" stroke-linejoin="round"/><path d="M1 7.5 Q1 6 2.5 6 H12 Q13.5 6 13.5 7.5 V12.5 H2.5 Q1.5 12.5 1.3 11Z" fill="#fce98e" stroke="#151515" stroke-width="1.2" stroke-linejoin="round"/></svg>
<div style="left:103.5px;top:290.78px;font-size:13.25px;line-height:13.25px;color:#141838;font-family:'Liberation Sans', sans-serif;letter-spacing:0.000px;white-space:nowrap;transform:scaleX(0.8628);transform-origin:0 0;-webkit-text-stroke:0.15px #141838;">ZZDEMO_STOCK</div>
<div style="left:92px;top:314px;width:2px;height:2px;background:#111;border-radius:1px;"></div>
<svg style="position:absolute;left:103px;top:307px;" width="16" height="16" viewBox="0 0 16 16"><path d="M2 1 H9.5 L12.5 4 V14.5 H2Z" fill="#eef2fc" stroke="#1a1a4a" stroke-width="1.1"/><path d="M9.5 1 V4 H12.5" fill="none" stroke="#1a1a4a" stroke-width="0.9"/><path d="M4 5.5 H10.5 M4 7.5 H10.5 M4 9.5 H10.5 M4 11.5 H10.5" stroke="#3a3ad0" stroke-width="0.9"/></svg>
<div style="left:124.2px;top:309.78px;font-size:13.25px;line-height:13.25px;color:#141838;font-family:'Liberation Sans', sans-serif;letter-spacing:0.000px;white-space:nowrap;transform:scaleX(0.9539);transform-origin:0 0;-webkit-text-stroke:0.15px #141838;">Stock overview</div>
<div style="left:340px;top:159px;width:24px;height:19px;background:linear-gradient(#fff9dc 0%,#fff1b8 25%,#fce699 70%,#f9df88 100%);border:1px solid #666;border-radius:2px;box-sizing:border-box;box-shadow:inset 0 1px 0 #fffcea;"></div>
<svg style="position:absolute;left:344px;top:160px;" width="16" height="16" viewBox="0 0 16 16"><rect x="3" y="2" width="12" height="12" fill="#c8c8c8" opacity="0.6"/><circle cx="6.5" cy="6.5" r="5" fill="#e8f4ff" stroke="#111" stroke-width="1.4"/><rect x="3" y="4" width="10" height="3" fill="#2a80f0"/><path d="M10 10 L14 14" stroke="#111" stroke-width="2.4"/><path d="M10.5 10.5 L13.5 13.5" stroke="#4070c0" stroke-width="1"/></svg>
<div style="left:369px;top:162px;width:1px;height:12px;background:#aabbd0;"></div>
<div style="left:375px;top:159px;width:23px;height:19px;background:linear-gradient(#fff9dc 0%,#fff1b8 25%,#fce699 70%,#f9df88 100%);border:1px solid #666;border-radius:2px;box-sizing:border-box;box-shadow:inset 0 1px 0 #fffcea;"></div>
<svg style="position:absolute;left:378px;top:160px;" width="16" height="16" viewBox="0 0 16 16"><rect x="6" y="1" width="4" height="3.5" fill="#f0f0c0" stroke="#111" stroke-width="1.1"/><rect x="4" y="4.5" width="8" height="4" fill="#3070d0" stroke="#111" stroke-width="1.1"/><rect x="1.5" y="8.5" width="13" height="4.5" fill="#90c830" stroke="#111" stroke-width="1.2"/></svg>
<div style="left:401px;top:159px;width:24px;height:19px;background:linear-gradient(#fff9dc 0%,#fff1b8 25%,#fce699 70%,#f9df88 100%);border:1px solid #666;border-radius:2px;box-sizing:border-box;box-shadow:inset 0 1px 0 #fffcea;"></div>
<svg style="position:absolute;left:405px;top:160px;" width="16" height="16" viewBox="0 0 16 16"><rect x="1.5" y="1.5" width="13" height="4.5" fill="#90c830" stroke="#111" stroke-width="1.2"/><rect x="4" y="6" width="8" height="4" fill="#3070d0" stroke="#111" stroke-width="1.1"/><rect x="4" y="6" width="8" height="1.3" fill="#f08080"/><rect x="6" y="10" width="4" height="4" fill="#f0f0c0" stroke="#111" stroke-width="1.1"/></svg>
<div style="left:428px;top:159px;width:23px;height:19px;background:linear-gradient(#fff9dc 0%,#fff1b8 25%,#fce699 70%,#f9df88 100%);border:1px solid #666;border-radius:2px;box-sizing:border-box;box-shadow:inset 0 1px 0 #fffcea;"></div>
<svg style="position:absolute;left:432px;top:160px;" width="16" height="16" viewBox="0 0 16 16"><path d="M1.5 0.8 H5.5 V4.5 H9.5 V0.8 H13.5 V4.5 L14.5 5.5 V14.2 H9 V10 H6 V14.2 H0.8 V5.5 L1.5 4.5Z" fill="#a8a8dc" stroke="#111" stroke-width="1.4" stroke-linejoin="round"/><path d="M2.8 2 V13 M10.8 2 V13" stroke="#ffffff" stroke-width="1" opacity="0.75"/><rect x="7" y="11" width="1.2" height="1.2" fill="#a8a8dc"/></svg>
<div style="left:454px;top:159px;width:24px;height:19px;background:linear-gradient(#fff9dc 0%,#fff1b8 25%,#fce699 70%,#f9df88 100%);border:1px solid #666;border-radius:2px;box-sizing:border-box;box-shadow:inset 0 1px 0 #fffcea;"></div>
<svg style="position:absolute;left:458px;top:160px;" width="16" height="16" viewBox="0 0 16 16"><path d="M1.5 0.8 H5.5 V4.5 H9.5 V0.8 H13.5 V4.5 L14.5 5.5 V14.2 H9 V10 H6 V14.2 H0.8 V5.5 L1.5 4.5Z" fill="#d4d4d4" stroke="#9a9a9a" stroke-width="1.4" stroke-linejoin="round"/><path d="M2.8 2 V13 M10.8 2 V13" stroke="#ffffff" stroke-width="1" opacity="0.75"/><rect x="7" y="11" width="1.2" height="1.2" fill="#d4d4d4"/><path d="M12 8.5 V15.5 M8.5 12 H15.5" stroke="#9a9a9a" stroke-width="3.4"/><path d="M12 9.3 V14.7 M9.3 12 H14.7" stroke="#fff" stroke-width="1.5"/></svg>
<div style="left:480px;top:159px;width:34px;height:19px;background:linear-gradient(#fff9dc 0%,#fff1b8 25%,#fce699 70%,#f9df88 100%);border:1px solid #666;border-radius:2px;box-sizing:border-box;box-shadow:inset 0 1px 0 #fffcea;"></div>
<svg style="position:absolute;left:484px;top:160px;" width="16" height="16" viewBox="0 0 16 16"><path d="M1 1.5 H15 L9.5 7.5 V14.5 L6.5 12.5 V7.5Z" fill="#90b0e0" stroke="#111" stroke-width="1.3" stroke-linejoin="round"/><path d="M2.5 2.5 H13.5 L11 5 H5Z" fill="#d8e8ff"/><circle cx="11" cy="11" r="2" fill="#fff" stroke="#111" stroke-width="1.1"/></svg>
<div style="left:502px;top:161px;width:1px;height:15px;background:#d8c890;"></div>
<div style="left:503px;top:161px;width:1px;height:15px;background:#fffbe8;"></div>
<svg style="position:absolute;left:507px;top:169px;" width="5" height="5" viewBox="0 0 5 5"><path d="M4.5 0.5 V4.5 H0.5Z" fill="#111"/></svg>
<div style="left:520px;top:162px;width:1px;height:12px;background:#aabbd0;"></div>
<div style="left:525px;top:159px;width:34px;height:19px;background:linear-gradient(#fff9dc 0%,#fff1b8 25%,#fce699 70%,#f9df88 100%);border:1px solid #666;border-radius:2px;box-sizing:border-box;box-shadow:inset 0 1px 0 #fffcea;"></div>
<svg style="position:absolute;left:529px;top:160px;" width="16" height="16" viewBox="0 0 16 16"><path d="M2 2 H14 V6 H11.5 V4.5 H7 L10 8 L7 11.5 H11.5 V10 H14 V14 H2 V12.5 L6 8 L2 3.5Z" fill="#b8d878" stroke="#9ab060" stroke-width="1" stroke-linejoin="round"/></svg>
<div style="left:547px;top:161px;width:1px;height:15px;background:#d8c890;"></div>
<div style="left:548px;top:161px;width:1px;height:15px;background:#fffbe8;"></div>
<svg style="position:absolute;left:552px;top:169px;" width="5" height="5" viewBox="0 0 5 5"><path d="M4.5 0.5 V4.5 H0.5Z" fill="#9a9ab0"/></svg>
<div style="left:562px;top:159px;width:34px;height:19px;background:linear-gradient(#fff9dc 0%,#fff1b8 25%,#fce699 70%,#f9df88 100%);border:1px solid #666;border-radius:2px;box-sizing:border-box;box-shadow:inset 0 1px 0 #fffcea;"></div>
<svg style="position:absolute;left:566px;top:160px;" width="16" height="16" viewBox="0 0 16 16"><path d="M1.5 1.5 H7.5 V3.5 H4.5 L6 5 L4.5 6.5 H7.5 V8.5 H1.5 V7.5 L3.5 5 L1.5 2.5Z" fill="#ece070" stroke="#b8a848" stroke-width="0.8"/><path d="M8.5 7.5 H14.5 V9.5 H11.5 L13 11 L11.5 12.5 H14.5 V14.5 H8.5 V13.5 L10.5 11 L8.5 8.5Z" fill="#f0c060" stroke="#c09848" stroke-width="0.8"/><path d="M2 15 L14 1" stroke="#8a8a70" stroke-width="0.8"/></svg>
<div style="left:584px;top:161px;width:1px;height:15px;background:#d8c890;"></div>
<div style="left:585px;top:161px;width:1px;height:15px;background:#fffbe8;"></div>
<svg style="position:absolute;left:589px;top:169px;" width="5" height="5" viewBox="0 0 5 5"><path d="M4.5 0.5 V4.5 H0.5Z" fill="#9a9ab0"/></svg>
<div style="left:601px;top:162px;width:1px;height:12px;background:#aabbd0;"></div>
<div style="left:606px;top:159px;width:24px;height:19px;background:linear-gradient(#fff9dc 0%,#fff1b8 25%,#fce699 70%,#f9df88 100%);border:1px solid #666;border-radius:2px;box-sizing:border-box;box-shadow:inset 0 1px 0 #fffcea;"></div>
<svg style="position:absolute;left:610px;top:160px;" width="16" height="16" viewBox="0 0 16 16"><path d="M4 1 H11 L13 3 V10 H4Z" fill="#dcecf8" stroke="#111" stroke-width="1.2"/><path d="M11 1 V3 H13" fill="#6aa0d0" stroke="#111" stroke-width="0.8"/><rect x="1" y="9.5" width="14" height="3" rx="1" fill="#fff" stroke="#111" stroke-width="1.2"/><rect x="2" y="12.5" width="12" height="2.5" fill="#3a4a6a" stroke="#111" stroke-width="0.8"/></svg>
<div style="left:633px;top:159px;width:37px;height:19px;background:linear-gradient(#fff9dc 0%,#fff1b8 25%,#fce699 70%,#f9df88 100%);border:1px solid #666;border-radius:2px;box-sizing:border-box;box-shadow:inset 0 1px 0 #fffcea;"></div>
<svg style="position:absolute;left:636px;top:160px;" width="16" height="16" viewBox="0 0 16 16"><path d="M7 1 H12 L14 3 V11 H7Z" fill="#f4f4f4" stroke="#333" stroke-width="1"/><path d="M5 3 H10 L12 5 V13 H5Z" fill="#f4f4f4" stroke="#333" stroke-width="1"/><path d="M7 7 H11 M7 9 H11" stroke="#888" stroke-width="0.8"/><ellipse cx="5" cy="10" rx="4.2" ry="4.8" fill="#3060d0" stroke="#111" stroke-width="1.1"/><path d="M5 5.2 V14.8 M1 10 H9 M2 7.5 Q5 9 8 7.5 M2 12.5 Q5 11 8 12.5" stroke="#fff" stroke-width="0.8" fill="none"/></svg>
<svg style="position:absolute;left:663px;top:169px;" width="5" height="5" viewBox="0 0 5 5"><path d="M4.5 0.5 V4.5 H0.5Z" fill="#111"/></svg>
<div style="left:672px;top:159px;width:37px;height:19px;background:linear-gradient(#fff9dc 0%,#fff1b8 25%,#fce699 70%,#f9df88 100%);border:1px solid #666;border-radius:2px;box-sizing:border-box;box-shadow:inset 0 1px 0 #fffcea;"></div>
<svg style="position:absolute;left:675px;top:160px;" width="16" height="16" viewBox="0 0 16 16"><path d="M1.5 1 H8 L10 3 V11 H1.5Z" fill="#f4f8ff" stroke="#333" stroke-width="1"/><path d="M3 4 H7 M3 6 H7" stroke="#7090c0" stroke-width="0.9"/><path d="M7 5 H12 L15 8 V15 H7Z" fill="#20a040" stroke="#111" stroke-width="1.1"/><path d="M4 8.5 H9 V6.5 L12.5 10 L9 13.5 V11.5 H4Z" fill="#f0e020" stroke="#111" stroke-width="1"/></svg>
<svg style="position:absolute;left:702px;top:169px;" width="5" height="5" viewBox="0 0 5 5"><path d="M4.5 0.5 V4.5 H0.5Z" fill="#111"/></svg>
<div style="left:712px;top:159px;width:24px;height:19px;background:linear-gradient(#fff9dc 0%,#fff1b8 25%,#fce699 70%,#f9df88 100%);border:1px solid #666;border-radius:2px;box-sizing:border-box;box-shadow:inset 0 1px 0 #fffcea;"></div>
<svg style="position:absolute;left:716px;top:160px;" width="16" height="16" viewBox="0 0 16 16"><rect x="1" y="2" width="14" height="12" fill="#222" /><rect x="2.2" y="3.2" width="3.4" height="2.8" fill="#f0d820"/><rect x="6.3" y="3.2" width="3.4" height="2.8" fill="#a8c0f0"/><rect x="10.4" y="3.2" width="3.4" height="2.8" fill="#40b040"/><rect x="2.2" y="6.6" width="3.4" height="2.8" fill="#f09810"/><rect x="6.3" y="6.6" width="3.4" height="2.8" fill="#c8a0e0"/><rect x="10.4" y="6.6" width="3.4" height="2.8" fill="#f0b890"/><rect x="2.2" y="10" width="3.4" height="2.8" fill="#f0a0b0"/><rect x="6.3" y="10" width="3.4" height="2.8" fill="#80d020"/><rect x="10.4" y="10" width="3.4" height="2.8" fill="#40a8f0"/></svg>
<div style="left:740px;top:162px;width:1px;height:12px;background:#aabbd0;"></div>
<div style="left:747px;top:159px;width:23px;height:19px;background:linear-gradient(#fff9dc 0%,#fff1b8 25%,#fce699 70%,#f9df88 100%);border:1px solid #666;border-radius:2px;box-sizing:border-box;box-shadow:inset 0 1px 0 #fffcea;"></div>
<svg style="position:absolute;left:750px;top:160px;" width="16" height="16" viewBox="0 0 16 16"><rect x="1.5" y="1.5" width="4" height="13" fill="#90b0e0" stroke="#111" stroke-width="1.1"/><rect x="6.5" y="9" width="3" height="5.5" fill="#fff" stroke="#111" stroke-width="1"/><rect x="9.5" y="4" width="3" height="10.5" fill="#e02020" stroke="#111" stroke-width="1"/><rect x="11" y="7" width="4" height="7.5" fill="#f0e020" stroke="#111" stroke-width="1"/></svg>
<div style="left:775px;top:162px;width:1px;height:12px;background:#aabbd0;"></div>
<div style="left:781px;top:159px;width:24px;height:19px;background:linear-gradient(#fff9dc 0%,#fff1b8 25%,#fce699 70%,#f9df88 100%);border:1px solid #666;border-radius:2px;box-sizing:border-box;box-shadow:inset 0 1px 0 #fffcea;"></div>
<svg style="position:absolute;left:785px;top:160px;" width="16" height="16" viewBox="0 0 16 16"><rect x="1" y="1" width="14" height="14" fill="#1a1ac8" stroke="#111" stroke-width="1.4"/><rect x="6.5" y="3" width="3" height="2.5" fill="#fff"/><path d="M5.5 6.5 H9.5 V11.5 H10.5 V13 H5.5 V11.5 H6.5 V8 H5.5Z" fill="#fff"/></svg>
<div style="left:807px;top:159px;width:24px;height:19px;background:linear-gradient(#fff9dc 0%,#fff1b8 25%,#fce699 70%,#f9df88 100%);border:1px solid #666;border-radius:2px;box-sizing:border-box;box-shadow:inset 0 1px 0 #fffcea;"></div>
<svg style="position:absolute;left:811px;top:160px;" width="16" height="16" viewBox="0 0 16 16"><path d="M3 13.5 L1.5 4 H12 L14.5 13.5Z" fill="#fff" stroke="#111" stroke-width="1.1"/><path d="M3 10.5 H6 M3 12.5 H6" stroke="#333"/><path d="M7.5 10 L14 2.5 L15.5 4 L9 11.5 L7 12Z" fill="#e0b030" stroke="#333" stroke-width="0.9"/></svg>
<div style="left:834px;top:159px;width:87px;height:19px;background:linear-gradient(#fff9dc 0%,#fff1b8 25%,#fce699 70%,#f9df88 100%);border:1px solid #666;border-radius:2px;box-sizing:border-box;box-shadow:inset 0 1px 0 #fffcea;"></div>
<svg style="position:absolute;left:837px;top:160px;" width="16" height="16" viewBox="0 0 16 16"><path d="M3 1.5 H10 L13 4.5 V14.5 H3Z" fill="#e8f0fc" stroke="#111" stroke-width="1.1"/><path d="M10 1.5 V4.5 H13" fill="none" stroke="#111" stroke-width="1"/></svg>
<div style="left:855px;top:162.56px;font-size:13.75px;line-height:13.75px;color:#1a1a2e;font-family:'Liberation Sans', sans-serif;letter-spacing:0.000px;white-space:nowrap;transform:scaleX(0.9312);transform-origin:0 0;-webkit-text-stroke:0.15px #1a1a2e;">Add report</div>
<div style="left:339px;top:401px;width:25px;height:20px;background:linear-gradient(#fff9dc 0%,#fff1b8 25%,#fce699 70%,#f9df88 100%);border:1px solid #666;border-radius:2px;box-sizing:border-box;box-shadow:inset 0 1px 0 #fffcea;"></div>
<svg style="position:absolute;left:344px;top:403px;" width="16" height="16" viewBox="0 0 16 16"><path d="M2 14 L3 10.5 L11.5 2 L14 4.5 L5.5 13Z" fill="#f0b040" stroke="#222" stroke-width="1.1" stroke-linejoin="round"/><path d="M11.5 2 L14 4.5 L12.5 6 L10 3.5Z" fill="#f08080" stroke="#222" stroke-width="0.8"/><path d="M2 14 L3 10.5 L5.5 13Z" fill="#333"/></svg>
<div style="left:367px;top:401px;width:24px;height:20px;background:linear-gradient(#fff9dc 0%,#fff1b8 25%,#fce699 70%,#f9df88 100%);border:1px solid #666;border-radius:2px;box-sizing:border-box;box-shadow:inset 0 1px 0 #fffcea;"></div>
<svg style="position:absolute;left:371px;top:403px;" width="16" height="16" viewBox="0 0 16 16"><path d="M4.5 10.5 L9.5 4.5 L14 9 L10.5 12.5" fill="none" stroke="#2a30c8" stroke-width="3.6" stroke-linejoin="miter"/><path d="M4.5 10.5 L9.5 4.5 L14 9 L10.5 12.5" fill="none" stroke="#d0dcff" stroke-width="1.4"/><path d="M1 6 V13 H8Z" fill="#2a30c8"/><path d="M2.3 9 V11.7 H5Z" fill="#d0dcff"/></svg>
<div style="left:394px;top:401px;width:25px;height:20px;background:linear-gradient(#fff9dc 0%,#fff1b8 25%,#fce699 70%,#f9df88 100%);border:1px solid #666;border-radius:2px;box-sizing:border-box;box-shadow:inset 0 1px 0 #fffcea;"></div>
<svg style="position:absolute;left:398px;top:403px;" width="16" height="16" viewBox="0 0 16 16"><rect x="2" y="2" width="12" height="2.5" rx="1" fill="#e0e8f0" stroke="#333" stroke-width="1"/><rect x="6" y="0.8" width="4" height="1.5" fill="#333"/><path d="M3.5 4.5 H12.5 L12 15 H4Z" fill="#c0d0e8" stroke="#333" stroke-width="1.1"/><path d="M6 6 V13.5 M8 6 V13.5 M10 6 V13.5" stroke="#6080b0" stroke-width="0.9"/></svg>
<div style="left:424px;top:404px;width:1px;height:13px;background:#6e7f96;"></div>
<div style="left:430px;top:401px;width:25px;height:20px;background:linear-gradient(#fff9dc 0%,#fff1b8 25%,#fce699 70%,#f9df88 100%);border:1px solid #666;border-radius:2px;box-sizing:border-box;box-shadow:inset 0 1px 0 #fffcea;"></div>
<svg style="position:absolute;left:434px;top:403px;" width="16" height="16" viewBox="0 0 16 16"><rect x="1.5" y="1.5" width="13" height="13" rx="1.5" fill="#f0a020" stroke="#333" stroke-width="1.1"/><rect x="4" y="1.5" width="8" height="6.5" fill="#a8a8e8" stroke="#333" stroke-width="0.8"/><rect x="4.5" y="10.5" width="7" height="4" fill="#c8c8f8" stroke="#333" stroke-width="0.8"/></svg>
<div style="left:459px;top:404px;width:1px;height:13px;background:#6e7f96;"></div>
<div style="left:465px;top:401px;width:77px;height:20px;background:linear-gradient(#fff9dc 0%,#fff1b8 25%,#fce699 70%,#f9df88 100%);border:1px solid #666;border-radius:2px;box-sizing:border-box;box-shadow:inset 0 1px 0 #fffcea;"></div>
<svg style="position:absolute;left:467px;top:403px;" width="16" height="16" viewBox="0 0 16 16"><path d="M7 1 H12 L14 3 V11 H7Z" fill="#f4f4f4" stroke="#333" stroke-width="1"/><path d="M5 3 H10 L12 5 V13 H5Z" fill="#f4f4f4" stroke="#333" stroke-width="1"/><path d="M7 7 H11 M7 9 H11" stroke="#888" stroke-width="0.8"/><ellipse cx="5" cy="10" rx="4.2" ry="4.8" fill="#3060d0" stroke="#111" stroke-width="1.1"/><path d="M5 5.2 V14.8 M1 10 H9" stroke="#fff" stroke-width="0.8" fill="none"/></svg>
<div style="left:485px;top:404.56px;font-size:13.75px;line-height:13.75px;color:#1a1a2e;font-family:'Liberation Sans', sans-serif;letter-spacing:0.000px;white-space:nowrap;transform:scaleX(0.8577);transform-origin:0 0;-webkit-text-stroke:0.15px #1a1a2e;">Designer</div>
<div style="left:544px;top:401px;width:89px;height:20px;background:linear-gradient(#fff9dc 0%,#fff1b8 25%,#fce699 70%,#f9df88 100%);border:1px solid #666;border-radius:2px;box-sizing:border-box;box-shadow:inset 0 1px 0 #fffcea;"></div>
<svg style="position:absolute;left:546px;top:403px;" width="16" height="16" viewBox="0 0 16 16"><circle cx="7" cy="7" r="6" fill="#e8f0f8" stroke="#333" stroke-width="1.2"/><path d="M7 3 V7 H10" fill="none" stroke="#111" stroke-width="1.3"/><path d="M7 12 L10 15 L16 8" fill="none" stroke="#111" stroke-width="3"/><path d="M7 12 L10 15 L16 8" fill="none" stroke="#30b030" stroke-width="1.6"/></svg>
<div style="left:564px;top:404.56px;font-size:13.75px;line-height:13.75px;color:#1a1a2e;font-family:'Liberation Sans', sans-serif;letter-spacing:0.000px;white-space:nowrap;transform:scaleX(0.9204);transform-origin:0 0;-webkit-text-stroke:0.15px #1a1a2e;">Run report</div>
<div style="left:332px;top:548px;width:1px;height:1px;background:#6a7a8a;"></div>
<div style="left:334px;top:549px;width:1px;height:1px;background:#6a7a8a;"></div>
<div style="left:332px;top:551px;width:1px;height:1px;background:#6a7a8a;"></div>
<div style="left:334px;top:552px;width:1px;height:1px;background:#6a7a8a;"></div>
<div style="left:332px;top:554px;width:1px;height:1px;background:#6a7a8a;"></div>
<div style="left:334px;top:555px;width:1px;height:1px;background:#6a7a8a;"></div>
<div style="left:332px;top:557px;width:1px;height:1px;background:#6a7a8a;"></div>
<div style="left:334px;top:558px;width:1px;height:1px;background:#6a7a8a;"></div>
<div style="left:332px;top:560px;width:1px;height:1px;background:#6a7a8a;"></div>
<div style="left:334px;top:561px;width:1px;height:1px;background:#6a7a8a;"></div>
<div style="left:332px;top:563px;width:1px;height:1px;background:#6a7a8a;"></div>
<div style="left:334px;top:564px;width:1px;height:1px;background:#6a7a8a;"></div>
<div style="left:48px;top:292px;width:298px;height:59px;background:rgba(72,104,152,0.5);border:2px solid rgba(82,112,155,0.7);box-shadow:0 0 1px rgba(82,112,155,0.6), inset 0 0 1px rgba(82,112,155,0.6);box-sizing:border-box;border-radius:10px;"></div>
<div style="left:816px;top:142px;width:180px;height:59px;background:rgba(72,104,152,0.5);border:2px solid rgba(82,112,155,0.7);box-shadow:0 0 1px rgba(82,112,155,0.6), inset 0 0 1px rgba(82,112,155,0.6);box-sizing:border-box;border-radius:10px;"></div>
<div style="left:333px;top:390px;width:876px;height:191px;background:rgba(72,104,152,0.5);border:2px solid rgba(82,112,155,0.7);box-shadow:0 0 1px rgba(82,112,155,0.6), inset 0 0 1px rgba(82,112,155,0.6);box-sizing:border-box;border-radius:32px;"></div>
<svg style="position:absolute;left:1180px;top:2px;" width="89" height="32" viewBox="0 0 89 32"><defs><linearGradient id="wg" x1="0" y1="0" x2="0" y2="1"><stop offset="0" stop-color="#5a7bc8"/><stop offset="0.45" stop-color="#4062b0"/><stop offset="1" stop-color="#2e4c96"/></linearGradient><filter id="ws" x="-10%" y="-10%" width="120%" height="140%"><feDropShadow dx="0" dy="1.5" stdDeviation="1.2" flood-color="#000" flood-opacity="0.35"/></filter></defs><path d="M0 0 Q2 0 2 4 V21 Q2 25.5 7 25.5 H66 Q71 25.5 75 22 L89 10 V0 Z" fill="url(#wg)" filter="url(#ws)"/><path d="M2 21 Q2 25.5 7 25.5 H66 Q71 25.5 75 22 L89 10" fill="none" stroke="#111a38" stroke-width="1.3"/><rect x="21.5" y="3.5" width="15" height="16" rx="2" fill="#3a5aa6" stroke="#2c468a"/><rect x="25" y="15" width="9" height="2" fill="#a8c0f4"/><rect x="40.5" y="3.5" width="15" height="16" rx="2" fill="#3a5aa6" stroke="#2c468a"/><rect x="44.5" y="10.5" width="6" height="5" fill="none" stroke="#a8c0f4" stroke-width="1.5"/><path d="M47 8 H53 V13" fill="none" stroke="#a8c0f4" stroke-width="1.5"/><rect x="59.5" y="3.5" width="15" height="16" rx="2" fill="#3a5aa6" stroke="#2c468a"/><path d="M63.5 7.5 L70.5 15.5 M70.5 7.5 L63.5 15.5" stroke="#a8c0f4" stroke-width="2"/></svg>
</body></html>
